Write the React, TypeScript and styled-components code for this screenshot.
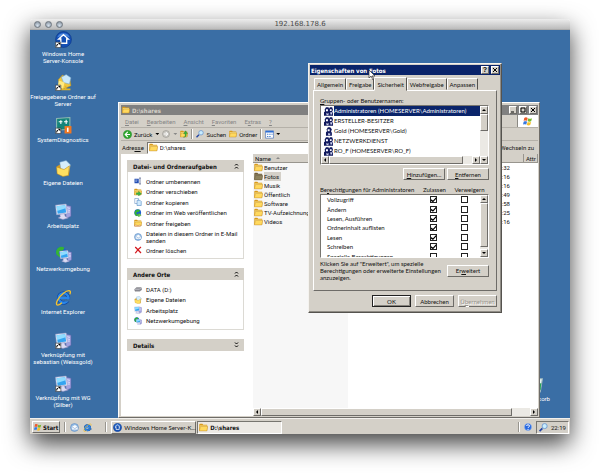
import React from "react";
import styled, { createGlobalStyle, css } from "styled-components";

const GlobalStyle = createGlobalStyle`
  * { box-sizing: border-box; }
  body {
    margin: 0;
    background: #fff;
    font: 6px/7px Roboto, "Liberation Sans", sans-serif;
    color: #111;
  }
  button, input { font: inherit; color: inherit; margin: 0; padding: 0; }
  a { color: inherit; text-decoration: none; }
  ul { list-style: none; margin: 0; padding: 0; }
  svg { display: block; flex: none; }
  u { text-decoration-thickness: 1px; text-underline-offset: 1px; }
`;

const face = "#d4d0c8";
const boldFace = '"DejaVu Sans Condensed", "DejaVu Sans", sans-serif';
const narrowFace = 'Lato, "Liberation Sans", sans-serif';
const raised = css`
  border: 1px solid;
  border-color: #fff #6e6c68 #6e6c68 #fff;
`;
const sunken = css`
  border: 1px solid;
  border-color: #77756f #fff #fff #77756f;
`;

/* ---------- icons ---------- */

type IconName =
  | "home" | "shared" | "diag" | "docs" | "computer" | "network" | "ie" | "bin"
  | "folder" | "rename" | "move" | "copy" | "web" | "share" | "mail" | "delete"
  | "drive" | "back" | "forward" | "up" | "search" | "views" | "windows"
  | "help" | "group" | "user" | "desktop";

const folderShape = (
  <>
    <path d="M1 5l2-2h9l3 3h14v21H1z" fill="#d99a1c" />
    <path d="M3 9h25v16H3z" fill="#fff0a0" />
    <path d="M1 28l4-16h26l-3 16z" fill="#ffd95f" stroke="#b97c12" strokeWidth="1.5" />
  </>
);
const monitorShape = (
  <>
    <path d="M19 4l11 2v19l-9 4z" fill="#a3a3e0" stroke="#6464a8" />
    <path d="M23 9l5 1M23 13l5 1M23 17l5 0" stroke="#f0f0ff" strokeWidth="1.5" />
    <path d="M1 4l20-2 2 18-20 2z" fill="#e8ecf8" stroke="#9aa2cc" />
    <path d="M3 6l16-2 2 14-16 2z" fill="#35a4f0" />
    <path d="M3 6l16-2 1 6L4 15z" fill="#8fdcff" />
    <path d="M9 21l9-1 1 5 6 3-10 3-9-3 4-2z" fill="#dcdcf4" stroke="#8a8abc" />
  </>
);
const globeShape = (
  <>
    <circle cx="11" cy="11" r="10" fill="#1d5fd0" />
    <path d="M4 5c5-5 11-4 14-1l-4 5-5 0-2 5 5 4-3 3C1 18 0 11 4 5z" fill="#35b335" />
  </>
);

const shapes: Record<IconName, React.ReactNode> = {
  home: (
    <>
      <circle cx="16" cy="16" r="15" fill="#1450b4" stroke="#0b3180" />
      <path d="M4 12a13 13 0 0 1 24 0c-8-4-16-4-24 0z" fill="#4b87dc" />
      <path d="M16 7l9 8h-3v8H11v-8H7z" fill="#1450b4" stroke="#fff" strokeWidth="2.5" />
    </>
  ),
  shared: (
    <>
      <path d="M6 11l8-9 14 8 2 12-16 7z" fill="#f1c63c" stroke="#b98c1d" />
      <path d="M12 6l9-5 9 6-3 12-11-3z" fill="#c9e9fb" stroke="#6f9fc4" />
      <path d="M7 12l11 4-3 12L5 24z" fill="#ffe980" />
      <path d="M3 29h26M20 22v7" stroke="#e0b52c" strokeWidth="3" />
    </>
  ),
  diag: (
    <>
      <path d="M3 3l25-2v22L3 25z" fill="#15847a" stroke="#8db8b2" strokeWidth="2" />
      <path d="M7 9h7m-3-3v7m6-4h7m-3-4v8" stroke="#fff" strokeWidth="2" />
      <path d="M18 17h13v14H18z" fill="#f07722" />
      <path d="M24 20v8" stroke="#fff" strokeWidth="3" />
    </>
  ),
  docs: (
    <>
      <path d="M3 12l9-5 17 3-3 19-21-4z" fill="#d69c24" />
      <path d="M9 4l12-3 8 8-4 14-14-4z" fill="#d6eefc" stroke="#6e9dc8" />
      <path d="M3 13l14 5 10-7-2 18-10 2L4 26z" fill="#ffdf60" stroke="#bb8618" />
    </>
  ),
  computer: monitorShape,
  desktop: monitorShape,
  network: (
    <>
      {globeShape}
      <g transform="translate(8 7) scale(.77)">{monitorShape}</g>
    </>
  ),
  ie: (
    <>
      <circle cx="16" cy="17" r="9" fill="none" stroke="#0b3f98" strokeWidth="7" />
      <circle cx="16" cy="17" r="9" fill="none" stroke="#2a86ea" strokeWidth="5" />
      <path d="M9 15h18v4H9z" fill="#2a86ea" />
      <path d="M17 19.500h14v4H19z" fill="#3a6ea5" />
      <path d="M28 10c4-10-5-8-12-2C7 15 0 27 4 30c3 1 7-2 9-4" fill="none" stroke="#f6c22e" strokeWidth="2.5" />
    </>
  ),
  bin: (
    <>
      <path d="M4 5h25l-4 25H8z" fill="#e8f5f4" stroke="#9bb7bd" strokeWidth="2" />
      <path d="M9 14l7-4 6 5 5-2-1 9-5-4-4 4zM12 20h14v6H13z" fill="#29a45b" />
    </>
  ),
  folder: folderShape,
  rename: (
    <>
      <path d="M2 7h17v18H2z" fill="#244fb4" />
      <path d="M5 12h9M5 17h7" stroke="#fff" strokeWidth="2" />
      <path d="M20 4h8M24 4v24M20 28h8" stroke="#59658f" strokeWidth="3" />
    </>
  ),
  move: (
    <>
      {folderShape}
      <path d="M9 19h9v-6l12 10-12 9v-6H9z" fill="#38b348" stroke="#16762a" />
    </>
  ),
  copy: (
    <>
      <path d="M3 2h15v20H3z" fill="#fff" stroke="#4e7fb8" strokeWidth="2" />
      <path d="M12 9h12l5 5v16H12z" fill="#cfe9fc" stroke="#3f78bb" strokeWidth="2" />
    </>
  ),
  web: (
    <>
      <g transform="scale(1.35)">{globeShape}</g>
      <path d="M10 22h8v-6l11 9-11 7v-5h-8z" fill="#72d24a" stroke="#257d25" />
    </>
  ),
  share: (
    <>
      {folderShape}
      <path d="M2 25c6-5 12 6 20-1l7 2c-6 7-21 8-27 3z" fill="#f6c99b" stroke="#9b5e35" />
    </>
  ),
  mail: (
    <>
      <circle cx="16" cy="16" r="14" fill="#9bc4ec" stroke="#4d7dbb" strokeWidth="2" />
      <path d="M6 12l12-6 10 8v10H7z" fill="#f9fcff" stroke="#6c94c4" />
      <path d="M7 13l10 7 10-6" fill="none" stroke="#6c94c4" strokeWidth="2" />
    </>
  ),
  delete: <path d="M5 4l23 24M28 4C18 11 10 20 5 29" fill="none" stroke="#d3161c" strokeWidth="5" />,
  drive: (
    <>
      <path d="M2 17l8-7h19l2 9-8 6H4z" fill="#8c8c94" stroke="#4c4c52" />
      <path d="M2 17h20l7-7" fill="none" stroke="#e8e8ee" strokeWidth="2" />
    </>
  ),
  back: (
    <>
      <circle cx="16" cy="16" r="15" fill="#2fa72f" stroke="#17731b" />
      <path d="M17 7l-9 9 9 9M9 16h16" fill="none" stroke="#fff" strokeWidth="4" />
    </>
  ),
  forward: (
    <>
      <circle cx="16" cy="16" r="14" fill="#c9c7c1" stroke="#8c8a85" strokeWidth="2" />
      <path d="M15 8l8 8-8 8M7 16h15" fill="none" stroke="#fff" strokeWidth="4" />
    </>
  ),
  up: (
    <>
      {folderShape}
      <path d="M13 29c9 0 8-8 7-14h-6L22 3l8 11h-5c2 10-2 16-12 15z" fill="#35b13d" stroke="#176f20" />
    </>
  ),
  search: (
    <>
      <path d="M2 29l10-10" stroke="#2445a4" strokeWidth="6" />
      <circle cx="20" cy="11" r="9" fill="#c8ecff" stroke="#6a96cd" strokeWidth="3" />
    </>
  ),
  views: (
    <>
      <path d="M2 3h28v26H2z" fill="#fff" stroke="#2d5fb5" strokeWidth="2" />
      <path d="M2 3h28v6H2z" fill="#2d6fd5" />
      <path d="M7 13h5v4H7zm8 0h5v4h-5zm8 0h4v4h-4zM7 21h5v4H7zm8 0h5v4h-5z" fill="#4b82cf" />
    </>
  ),
  windows: (
    <>
      <path d="M4 6c4-3 8-2 11 0l-2 10c-4-2-7-2-11 0z" fill="#ed5b2a" />
      <path d="M17 7c4 3 8 2 12 0l-3 10c-4 2-7 2-11 0z" fill="#75b82e" />
      <path d="M2 18c4-2 7-2 11 0l-3 10c-3-2-7-2-10 0z" fill="#3477df" />
      <path d="M15 19c3 2 7 2 11 0l-3 10c-4 2-7 2-11 0z" fill="#f6bf27" />
    </>
  ),
  help: (
    <>
      <circle cx="16" cy="16" r="14" fill="#2667e0" stroke="#8fb7f7" strokeWidth="2" />
      <path d="M10 12c1-7 12-6 12 0 0 4-6 4-6 8" fill="none" stroke="#fff" strokeWidth="4" />
      <circle cx="16" cy="25" r="2.5" fill="#fff" />
    </>
  ),
  group: (
    <>
      <path d="M0 31V19l4-4-2-5 5-9h9l2 5 3-5h8l3 9-3 7 3 4v10z" fill="#10185c" />
      <path d="M7 8h7v7H7zM21 8h6v6h-6z" fill="#fff" />
      <path d="M8 20l4 4 4-4v9H9zM22 19h7v8h-6z" fill="#c9cde8" />
    </>
  ),
  user: (
    <>
      <path d="M7 31V19l4-4-2-6 5-8h8l6 7-3 8 3 4v11z" fill="#10185c" />
      <path d="M13 8h7v7h-7z" fill="#fff" />
      <path d="M14 20l4 4 4-4v9h-7z" fill="#c9cde8" />
    </>
  ),
};

const Icon = ({ name, size = 9, shortcut = false }: { name: IconName; size?: number; shortcut?: boolean }) => (
  <svg width={size} height={size} viewBox="0 0 32 32" aria-hidden="true">
    {shapes[name]}
    {shortcut && (
      <>
        <path d="M1 21h10v10H1z" fill="#fff" stroke="#222" />
        <path d="M3 29c0-3 1-4 3-4" fill="none" stroke="#000" strokeWidth="2" />
        <path d="M5 22h5v5z" fill="#000" />
      </>
    )}
  </svg>
);

const Arrow = styled.i<{ $dir: "up" | "down" | "left" | "right"; $pale?: boolean }>`
  flex: none;
  width: ${(p) => (p.$dir === "up" || p.$dir === "down" ? 4 : 2)}px;
  height: ${(p) => (p.$dir === "up" || p.$dir === "down" ? 2 : 4)}px;
  background: ${(p) => (p.$pale ? "#888" : "#000")};
  clip-path: ${(p) =>
    ({
      up: "polygon(50% 0, 100% 100%, 0 100%)",
      down: "polygon(0 0, 100% 0, 50% 100%)",
      left: "polygon(100% 0, 100% 100%, 0 50%)",
      right: "polygon(0 0, 100% 50%, 0 100%)",
    })[p.$dir]};
`;

/* ---------- viewer frame ---------- */

const Page = styled.main`
  min-height: 100vh;
  padding: 19px 30px 42px;
  display: flex;
`;
const Viewer = styled.section`
  flex: 1;
  min-width: 0;
  display: flex;
  flex-direction: column;
  border-radius: 3px 3px 0 0;
  box-shadow: 0 10px 24px rgba(0, 0, 0, 0.75);
`;
const ViewerBar = styled.header`
  height: 11px;
  display: grid;
  grid-template-columns: 1fr auto 1fr;
  align-items: center;
  padding: 0 4px;
  background: linear-gradient(#ededed, #bcbcbc);
  border-bottom: 1px solid #aaa;
  border-radius: 3px 3px 0 0;
  font-family: "DejaVu Sans", sans-serif;
  font-size: 7px;
  color: #4a4a4a;
`;
const Lights = styled.div`
  display: flex;
  gap: 4px;
`;
const Light = styled.button`
  width: 7px;
  height: 7px;
  border: 1px solid #6f7780;
  border-radius: 50%;
  background: radial-gradient(circle at 50% 70%, #d3dfeb, #7f8b98);
`;
const Desktop = styled.div`
  position: relative;
  flex: 1;
  background: #3a6ea5;
`;
const Shortcuts = styled.nav`
  width: 66px;
  display: flex;
  flex-direction: column;
`;
const Shortcut = styled.button`
  height: 43px;
  padding-top: 1px;
  border: 0;
  background: none;
  display: flex;
  flex-direction: column;
  align-items: center;
  gap: 2px;
  color: #fff;
  white-space: pre;
  text-align: center;
`;
const BinSpot = styled.div`
  position: absolute;
  right: 20px;
  bottom: 0;
`;

/* ---------- explorer ---------- */

const Explorer = styled.section`
  position: absolute;
  inset: 72px 30px 0 88px;
  display: flex;
  flex-direction: column;
  padding: 2px 1px 1px 2px;
  background: ${face};
  ${raised}
`;
const TitleBar = styled.header<{ $active?: boolean }>`
  height: 10px;
  flex: none;
  display: flex;
  align-items: center;
  gap: 2px;
  padding: 0 1px;
  background: ${(p) => (p.$active ? "#0a246a" : "#808080")};
  color: ${(p) => (p.$active ? "#fff" : "#d4d0c8")};
  font-family: ${boldFace};
  font-weight: 700;
`;
const Title = styled.h2`
  flex: 1;
  margin: 0;
  font: inherit;
`;
const Caption = styled.button`
  width: 8px;
  height: 8px;
  display: grid;
  place-items: center;
  background: ${face};
  color: #000;
  font: 700 7px/6px "Liberation Sans", sans-serif;
  ${raised}
`;
const MenuRow = styled.div`
  height: 13px;
  flex: none;
  display: flex;
  border-bottom: 1px solid #b5b1a9;
`;
const Menu = styled.nav`
  flex: 1;
  display: flex;
  align-items: center;
  gap: 8px;
  padding-left: 4px;
`;
const MenuItem = styled.button`
  border: 0;
  background: none;
  color: #858585;
`;
const Throbber = styled.div`
  width: 21px;
  display: grid;
  place-items: center;
  background: #fff;
  border-left: 1px solid #8b8983;
`;
const Toolbar = styled.div`
  height: 12px;
  flex: none;
  display: flex;
  align-items: center;
  gap: 3px;
  padding-left: 2px;
`;
const Tool = styled.button`
  display: flex;
  align-items: center;
  gap: 2px;
  border: 0;
  background: none;
`;
const Divider = styled.span`
  width: 2px;
  height: 10px;
  border-left: 1px solid #98958e;
  border-right: 1px solid #fff;
`;
const AddressRow = styled.div`
  height: 14px;
  flex: none;
  display: flex;
  align-items: center;
  gap: 3px;
  padding: 0 4px 0 1px;
  border-top: 1px solid #b5b1a9;
`;
const AddressBox = styled.div`
  flex: 1;
  height: 12px;
  display: flex;
  align-items: center;
  gap: 2px;
  padding-left: 1px;
  background: #fff;
  ${sunken}
`;
const AddressInput = styled.input`
  flex: 1;
  min-width: 0;
  border: 0;
  background: none;
  outline: 0;
`;
const Content = styled.div`
  flex: 1;
  min-height: 0;
  display: flex;
  background: #fff;
`;
const Tasks = styled.aside`
  width: 132px;
  flex: none;
  display: flex;
  flex-direction: column;
  gap: 9px;
  padding: 6px 9px 0 6px;
`;
const TaskBox = styled.section``;
const TaskHead = styled.button`
  width: 100%;
  height: 12px;
  display: flex;
  align-items: center;
  justify-content: space-between;
  padding: 0 5px 0 6px;
  border: 0;
  background: ${face};
  font-family: ${boldFace};
  font-weight: 700;
`;
const TaskList = styled.ul<{ $tall?: boolean }>`
  height: ${(p) => (p.$tall ? 87 : 50)}px;
  display: flex;
  flex-direction: column;
  justify-content: space-between;
  padding: 5px 0 4px 6px;
  border: 1px solid #dcdad4;
  border-top: 0;
`;
const TaskLink = styled.a`
  display: flex;
  align-items: center;
  gap: 4px;
`;
const Files = styled.div`
  flex: 1;
  min-width: 0;
  display: flex;
  flex-direction: column;
  background: linear-gradient(#f7f7f7, #f7f7f7) 0 0 / 95px 100% no-repeat;
`;
const FileArea = styled.div`
  flex: 1;
`;
const FileTable = styled.table`
  width: 100%;
  table-layout: fixed;
  border-collapse: separate;
  border-spacing: 0;
  th {
    height: 9px;
    padding: 0 2px;
    background: ${face};
    font-weight: 400;
    text-align: left;
    overflow: hidden;
    white-space: nowrap;
    border-bottom: 1px solid #98958e;
    border-right: 1px solid #98958e;
  }
  td { height: 9px; padding: 0; white-space: nowrap; }
  td:nth-child(3) { text-align: right; padding-right: 14px; }
`;
const FileName = styled.a<{ $selected?: boolean }>`
  display: flex;
  align-items: center;
  gap: 1px;
  padding-left: 1px;
  svg { filter: ${(p) => (p.$selected ? "brightness(.6) saturate(.5)" : "none")}; }
  span { padding: 1px 2px 1px 0; background: ${(p) => (p.$selected ? face : "none")}; }
`;
const SortHead = styled.span`
  display: flex;
  align-items: center;
  gap: 5px;
`;

/* ---------- scrollbars ---------- */

const Track = styled.div<{ $vertical?: boolean }>`
  flex: none;
  display: flex;
  flex-direction: ${(p) => (p.$vertical ? "column" : "row")};
  ${(p) => (p.$vertical ? "width" : "height")}: 8px;
  background: #ebe9e4;
`;
const ScrollKey = styled.button`
  width: 8px;
  height: 8px;
  flex: none;
  display: grid;
  place-items: center;
  background: ${face};
  ${raised}
`;
const Thumb = styled.span<{ $size: string }>`
  flex: 0 0 ${(p) => p.$size};
  background: ${face};
  ${raised}
`;
const Gap = styled.span`
  flex: 1;
`;
const Scrollbar = ({ vertical, size }: { vertical?: boolean; size: string }) => (
  <Track $vertical={vertical}>
    <ScrollKey aria-label="Zurück blättern"><Arrow $dir={vertical ? "up" : "left"} /></ScrollKey>
    <Thumb $size={size} />
    <Gap />
    <ScrollKey aria-label="Weiter blättern"><Arrow $dir={vertical ? "down" : "right"} /></ScrollKey>
  </Track>
);

/* ---------- properties dialog ---------- */

const Dialog = styled.section`
  position: absolute;
  left: 278px;
  top: 33px;
  width: 194px;
  padding: 1px;
  background: ${face};
  border: 1px solid;
  border-color: #f4f2ee #55534f #55534f #f4f2ee;
  box-shadow: inset -1px -1px #908d86;
  font-family: ${narrowFace};
`;
const DialogBody = styled.div`
  padding: 2px 3px 4px;
`;
const Tabs = styled.div`
  display: flex;
  align-items: flex-end;
  padding-left: 1px;
`;
const Tab = styled.button<{ $on?: boolean }>`
  position: relative;
  height: ${(p) => (p.$on ? 14 : 12)}px;
  margin-bottom: ${(p) => (p.$on ? -1 : 0)}px;
  padding: 0 2px;
  background: ${face};
  border: 1px solid;
  border-color: #fff #55534f transparent #fff;
  border-radius: 1px 1px 0 0;
  white-space: nowrap;
`;
const TabPanel = styled.div`
  padding: 5px 7px 9px 6px;
  ${raised}
`;
const ListLabel = styled.div`
  height: 9px;
  line-height: 9px;
`;
const Well = styled.div<{ $high: number }>`
  height: ${(p) => p.$high}px;
  display: flex;
  background: #fff;
  overflow: hidden;
  ${sunken}
`;
const GroupColumn = styled.div`
  flex: 1;
  min-width: 0;
  display: flex;
  flex-direction: column;
`;
const GroupList = styled.ul`
  flex: 1;
  padding-left: 3px;
`;
const Group = styled.li<{ $on?: boolean }>`
  height: 10px;
  display: flex;
  align-items: center;
  gap: 1px;
  span {
    flex: 1;
    line-height: 10px;
    white-space: nowrap;
    background: ${(p) => (p.$on ? "#0a246a" : "none")};
    color: ${(p) => (p.$on ? "#fff" : "inherit")};
  }
`;
const ButtonRow = styled.div<{ $foot?: boolean }>`
  display: flex;
  justify-content: flex-end;
  gap: ${(p) => (p.$foot ? 4 : 2)}px;
  padding-top: ${(p) => (p.$foot ? 4 : 3)}px;
`;
const PushButton = styled.button<{ $main?: boolean }>`
  width: ${(p) => (p.$main ? 39 : 42)}px;
  height: 12px;
  flex: none;
  background: ${face};
  ${raised}
  &:disabled { color: #96938c; text-shadow: 1px 1px #fff; }
`;
const DefaultButton = styled(PushButton)`
  border-color: #222;
  box-shadow: inset 1px 1px #fff, inset -1px -1px #85827b;
`;
const PermHead = styled.div`
  display: grid;
  grid-template-columns: 1fr 31px 39px;
  padding-top: 5px;
  line-height: 9px;
  text-align: center;
  white-space: nowrap;
  span:first-child { text-align: left; }
`;
const PermTable = styled.table`
  flex: 1;
  height: 66px;
  table-layout: fixed;
  border-spacing: 0;
  td { padding: 0; text-align: center; }
  th { padding: 0 0 0 6px; font-weight: 400; text-align: left; white-space: nowrap; }
`;
const Tick = styled.input`
  appearance: none;
  display: block;
  width: 7px;
  height: 7px;
  margin: 0 auto;
  border: 1px solid #222;
  background: #fff;
  &:checked::after {
    content: "";
    display: block;
    width: 5px;
    height: 5px;
    background: #000;
    clip-path: polygon(0 40%, 40% 65%, 100% 0, 100% 35%, 40% 100%, 0 75%);
  }
`;
const NoteRow = styled.div`
  display: flex;
  align-items: center;
  justify-content: space-between;
  padding-top: 2px;
  p { margin: 0; white-space: pre; }
`;
const Pointer = styled.svg`
  position: absolute;
  left: 59px;
  top: 5px;
`;

/* ---------- taskbar ---------- */

const Taskbar = styled.footer`
  height: 16px;
  display: flex;
  align-items: center;
  gap: 4px;
  padding: 1px 1px 0 2px;
  background: ${face};
  border-top: 1px solid #f2f0ec;
`;
const StartButton = styled.button`
  height: 12px;
  display: flex;
  align-items: center;
  gap: 1px;
  padding: 0 1px;
  background: ${face};
  font-family: ${boldFace};
  font-weight: 700;
  ${raised}
`;
const Quick = styled.div`
  width: 31px;
  display: flex;
  gap: 4px;
`;
const BareButton = styled.button`
  border: 0;
  background: none;
`;
const TaskButtons = styled.div`
  flex: 1;
  display: flex;
  gap: 1px;
`;
const TaskButton = styled.button<{ $on?: boolean }>`
  width: 85px;
  height: 13px;
  display: flex;
  align-items: center;
  gap: 2px;
  padding: 0 1px;
  white-space: nowrap;
  background: ${(p) => (p.$on ? "#ece9e4" : face)};
  font-family: ${(p) => (p.$on ? boldFace : narrowFace)};
  font-weight: ${(p) => (p.$on ? 700 : 400)};
  ${(p) => (p.$on ? sunken : raised)}
`;
const Tray = styled.div`
  width: 33px;
  height: 13px;
  display: flex;
  align-items: center;
  gap: 3px;
  padding-left: 2px;
  ${sunken}
`;

const shortcuts: [IconName, string, boolean][] = [
  ["home", "Windows Home\nServer-Konsole", true],
  ["shared", "Freigegebene Ordner auf\nServer", true],
  ["diag", "SystemDiagnostics", true],
  ["docs", "Eigene Dateien", false],
  ["computer", "Arbeitsplatz", false],
  ["network", "Netzwerkumgebung", false],
  ["ie", "Internet Explorer", false],
  ["computer", "Verknüpfung mit\nsebastian (Weissgold)", true],
  ["computer", "Verknüpfung mit WG\n(Silber)", true],
];
const folderTasks: [IconName, string][] = [
  ["rename", "Ordner umbenennen"],
  ["move", "Ordner verschieben"],
  ["copy", "Ordner kopieren"],
  ["web", "Ordner im Web veröffentlichen"],
  ["share", "Ordner freigeben"],
  ["mail", "Dateien in diesem Ordner in E-Mail senden"],
  ["delete", "Ordner löschen"],
];
const places: [IconName, string][] = [
  ["drive", "DATA (D:)"],
  ["docs", "Eigene Dateien"],
  ["desktop", "Arbeitsplatz"],
  ["network", "Netzwerkumgebung"],
];
const files = [
  ["Benutzer", ":32"],
  ["Fotos", ":16"],
  ["Musik", ":16"],
  ["Öffentlich", ":49"],
  ["Software", ":58"],
  ["TV-Aufzeichnungen", ":25"],
  ["Videos", ":16"],
];
const groups: [IconName, string][] = [
  ["group", "Administratoren (HOMESERVER\\Administratoren)"],
  ["group", "ERSTELLER-BESITZER"],
  ["user", "Gold (HOMESERVER\\Gold)"],
  ["group", "NETZWERKDIENST"],
  ["group", "RO_F (HOMESERVER\\RO_F)"],
];
const permissions: [string, boolean][] = [
  ["Vollzugriff", true],
  ["Ändern", true],
  ["Lesen, Ausführen", true],
  ["Ordnerinhalt auflisten", true],
  ["Lesen", true],
  ["Schreiben", true],
  ["Spezielle Berechtigungen", false],
];

const Chevron = ({ down = false }: { down?: boolean }) => (
  <svg width="5" height="6" viewBox="0 0 10 12" fill="none" stroke="#000" strokeWidth="2" aria-hidden="true">
    <path d={down ? "M2 1l3 3 3-3M2 7l3 3 3-3" : "M2 5l3-3 3 3M2 11l3-3 3 3"} />
  </svg>
);

const TaskGroup = ({ title, items, tall }: { title: string; items?: [IconName, string][]; tall?: boolean }) => (
  <TaskBox>
    <TaskHead>{title}<Chevron down={!items} /></TaskHead>
    {items && (
      <TaskList $tall={tall}>
        {items.map(([icon, text]) => (
          <li key={text}><TaskLink href="#"><Icon name={icon} size={8} /><span>{text}</span></TaskLink></li>
        ))}
      </TaskList>
    )}
  </TaskBox>
);

const ExplorerWindow = () => (
  <Explorer aria-label="D:\shares">
    <TitleBar>
      <Icon name="folder" size={8} />
      <Title>D:\shares</Title>
      <Caption aria-label="Minimieren">
        <svg width="6" height="6" viewBox="0 0 6 6"><path d="M1 5h3" stroke="#000" /></svg>
      </Caption>
      <Caption aria-label="Maximieren">
        <svg width="6" height="6" viewBox="0 0 6 6"><path d="M1 1h4v4H1z" fill="none" stroke="#000" /></svg>
      </Caption>
      <Caption aria-label="Schließen">
        <svg width="6" height="6" viewBox="0 0 6 6"><path d="M1 1l4 4M5 1L1 5" stroke="#000" /></svg>
      </Caption>
    </TitleBar>
    <MenuRow>
      <Menu>
        <MenuItem><u>D</u>atei</MenuItem>
        <MenuItem><u>B</u>earbeiten</MenuItem>
        <MenuItem><u>A</u>nsicht</MenuItem>
        <MenuItem><u>F</u>avoriten</MenuItem>
        <MenuItem>E<u>x</u>tras</MenuItem>
        <MenuItem><u>?</u></MenuItem>
      </Menu>
      <Throbber><Icon name="windows" size={10} /></Throbber>
    </MenuRow>
    <Toolbar>
      <Tool><Icon name="back" />Zurück</Tool>
      <Arrow $dir="down" />
      <Tool aria-label="Vorwärts"><Icon name="forward" size={8} /></Tool>
      <Arrow $dir="down" $pale />
      <Tool aria-label="Aufwärts"><Icon name="up" size={8} /></Tool>
      <Divider />
      <Tool><Icon name="search" size={8} />Suchen</Tool>
      <Tool><Icon name="folder" size={8} />Ordner</Tool>
      <Divider />
      <Tool aria-label="Ansichten"><Icon name="views" /><Arrow $dir="down" /></Tool>
    </Toolbar>
    <AddressRow>
      <label htmlFor="address">Adre<u>ss</u>e</label>
      <AddressBox>
        <Icon name="folder" />
        <AddressInput id="address" defaultValue="D:\shares" />
      </AddressBox>
      <BareButton>Wechseln zu</BareButton>
    </AddressRow>
    <Content>
      <Tasks>
        <TaskGroup title="Datei- und Ordneraufgaben" items={folderTasks} tall />
        <TaskGroup title="Andere Orte" items={places} />
        <TaskGroup title="Details" />
      </Tasks>
      <Files>
        <FileArea>
          <FileTable>
            <colgroup>
              <col width="95" /><col /><col width="37" /><col width="14" />
            </colgroup>
            <thead>
              <tr>
                <th><SortHead>Name<Arrow $dir="up" $pale /></SortHead></th>
                <th /><th /><th>Attr</th>
              </tr>
            </thead>
            <tbody>
              {files.map(([name, time]) => (
                <tr key={name}>
                  <td>
                    <FileName href="#" $selected={name === "Fotos"}>
                      <Icon name="folder" /><span>{name}</span>
                    </FileName>
                  </td>
                  <td /><td>{time}</td><td />
                </tr>
              ))}
            </tbody>
          </FileTable>
        </FileArea>
        <Scrollbar size="88%" />
      </Files>
    </Content>
  </Explorer>
);

const PropertiesDialog = () => (
  <Dialog role="dialog" aria-label="Eigenschaften von Fotos">
    <TitleBar $active>
      <Title>Eigenschaften von Fotos</Title>
      <Caption aria-label="Hilfe">?</Caption>
      <Caption aria-label="Schließen">
        <svg width="6" height="6" viewBox="0 0 6 6"><path d="M1 1l4 4M5 1L1 5" stroke="#000" /></svg>
      </Caption>
    </TitleBar>
    <DialogBody>
      <Tabs role="tablist">
        {["Allgemein", "Freigabe", "Sicherheit", "Webfreigabe", "Anpassen"].map((t) => (
          <Tab key={t} role="tab" aria-selected={t === "Sicherheit"} $on={t === "Sicherheit"}>{t}</Tab>
        ))}
      </Tabs>
      <TabPanel role="tabpanel">
        <ListLabel id="groups"><u>G</u>ruppen- oder Benutzernamen:</ListLabel>
        <Well $high={60}>
          <GroupColumn>
            <GroupList role="listbox" aria-labelledby="groups">
              {groups.map(([icon, name], i) => (
                <Group key={name} role="option" aria-selected={i === 0} $on={i === 0}>
                  <Icon name={icon} /><span>{name}</span>
                </Group>
              ))}
            </GroupList>
            <Scrollbar size="134px" />
          </GroupColumn>
          <Scrollbar vertical size="17px" />
        </Well>
        <ButtonRow>
          <PushButton><u>H</u>inzufügen...</PushButton>
          <PushButton><u>E</u>ntfernen</PushButton>
        </ButtonRow>
        <PermHead>
          <span>Be<u>r</u>echtigungen für Administratoren</span>
          <span>Zulassen</span>
          <span>Verweigern</span>
        </PermHead>
        <Well $high={64}>
          <PermTable>
            <colgroup><col /><col width="31" /><col width="31" /></colgroup>
            <tbody>
              {permissions.map(([name, on]) => (
                <tr key={name}>
                  <th scope="row">{name}</th>
                  <td><Tick type="checkbox" defaultChecked={on} aria-label={`${name} zulassen`} /></td>
                  <td><Tick type="checkbox" aria-label={`${name} verweigern`} /></td>
                </tr>
              ))}
            </tbody>
          </PermTable>
          <Scrollbar vertical size="44px" />
        </Well>
        <NoteRow>
          <p>{'Klicken Sie auf "Erweitert", um spezielle\nBerechtigungen oder erweiterte Einstellungen\nanzuzeigen.'}</p>
          <PushButton>Er<u>w</u>eitert</PushButton>
        </NoteRow>
      </TabPanel>
      <ButtonRow $foot>
        <DefaultButton $main>OK</DefaultButton>
        <PushButton $main>Abbrechen</PushButton>
        <PushButton $main disabled>Ü<u>b</u>ernehmen</PushButton>
      </ButtonRow>
    </DialogBody>
    <Pointer width="8" height="12" viewBox="0 0 8 12" aria-hidden="true">
      <path d="M1 1v8l2-2 2 4 1-1-2-3h3z" fill="#fff" stroke="#333" strokeWidth=".7" />
    </Pointer>
  </Dialog>
);

export default function App() {
  return (
    <>
      <GlobalStyle />
      <Page>
        <Viewer>
          <ViewerBar>
            <Lights>
              <Light aria-label="Schließen" />
              <Light aria-label="Minimieren" />
              <Light aria-label="Zoomen" />
            </Lights>
            <span>192.168.178.6</span>
          </ViewerBar>
          <Desktop>
            <Shortcuts>
              {shortcuts.map(([icon, label, link]) => (
                <Shortcut key={label}>
                  <Icon name={icon} size={17} shortcut={link} />
                  <span>{label}</span>
                </Shortcut>
              ))}
            </Shortcuts>
            <BinSpot>
              <Shortcut><Icon name="bin" size={17} /><span>Papierkorb</span></Shortcut>
            </BinSpot>
            <ExplorerWindow />
            <PropertiesDialog />
          </Desktop>
          <Taskbar>
            <StartButton><Icon name="windows" size={8} />Start</StartButton>
            <Divider />
            <Quick>
              <BareButton aria-label="Desktop anzeigen"><Icon name="mail" /></BareButton>
              <BareButton aria-label="Internet Explorer"><Icon name="ie" /></BareButton>
            </Quick>
            <Divider />
            <TaskButtons>
              <TaskButton><Icon name="home" />Windows Home Server-K...</TaskButton>
              <TaskButton $on><Icon name="folder" />D:\shares</TaskButton>
            </TaskButtons>
            <Divider />
            <BareButton aria-label="Hilfe"><Icon name="help" size={8} /></BareButton>
            <Tray><Icon name="search" /><time>22:19</time></Tray>
          </Taskbar>
        </Viewer>
      </Page>
    </>
  );
}
